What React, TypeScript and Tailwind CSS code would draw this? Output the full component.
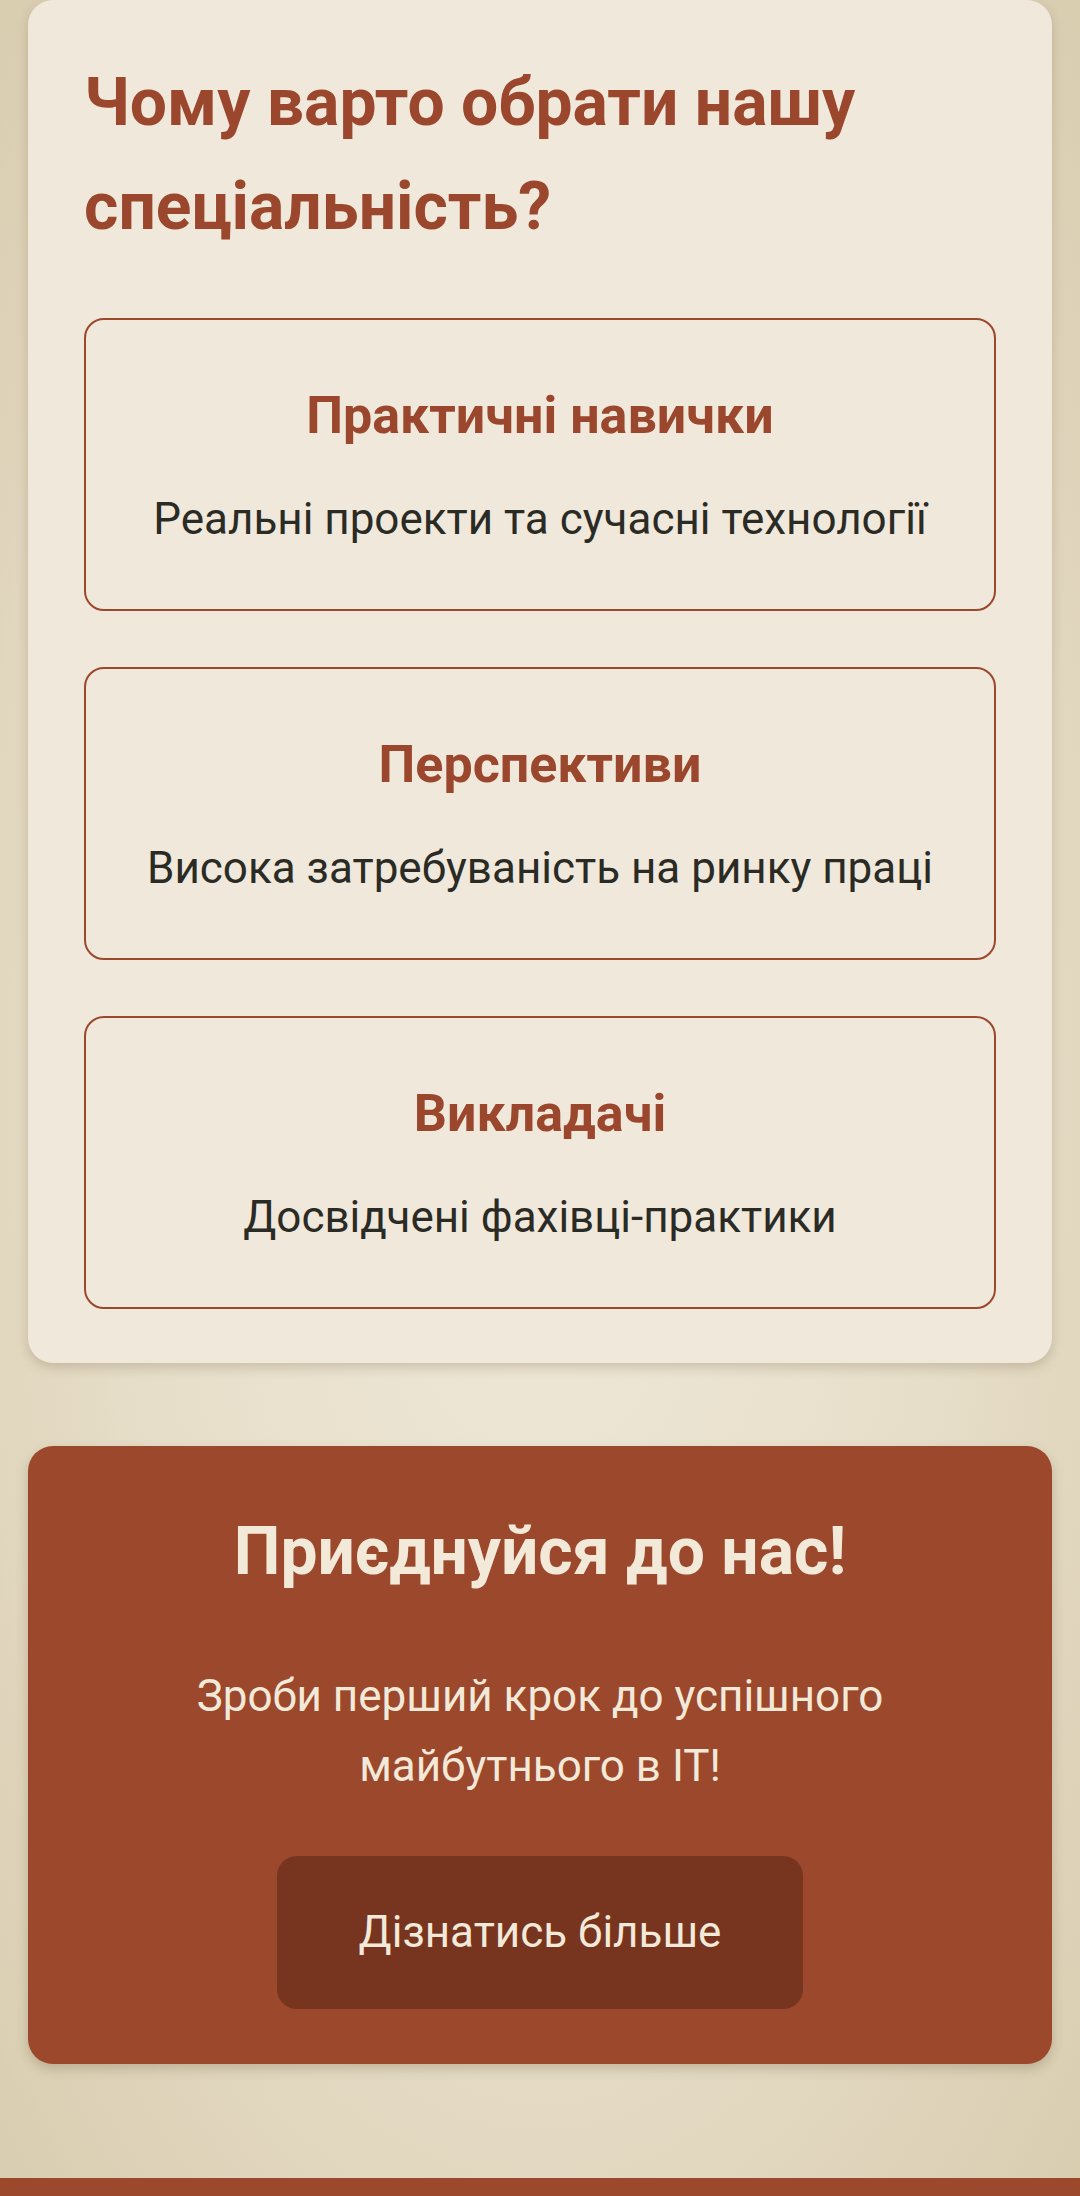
const FEATURES = [
  { title: 'Практичні навички', text: 'Реальні проекти та сучасні технології' },
  { title: 'Перспективи', text: 'Висока затребуваність на ринку праці' },
  { title: 'Викладачі', text: 'Досвідчені фахівці-практики' },
];

function FeatureCard({ title, text }: { title: string; text: string }) {
  return (
    <div className="rounded-[20px] border-2 border-[#9b482d] pt-[54px] pb-[56px] text-center">
      <h3 className="text-[52px] leading-[84px] font-bold text-[#9b472d]">{title}</h3>
      <p className="mt-[28px] text-[44px] leading-[67px] text-[#2b2b26]">{text}</p>
    </div>
  );
}

export default function App() {
  return (
    <div className="min-h-screen flex flex-col bg-[radial-gradient(ellipse_at_center,#f0e9da_0%,#e7dec9_55%,#d9cdb0_100%)] font-['Roboto','Noto_Sans',sans-serif]">
      <main className="flex-1 px-[28px]">
        <section className="rounded-[25px] bg-[#f0e8da] px-[56px] pt-[51px] pb-[54px] shadow-[0_5px_12px_rgba(90,70,40,0.22)]">
          <h2 className="text-[66px] leading-[104px] font-bold text-[#9b472d]">
            Чому варто обрати нашу спеціальність?
          </h2>
          <div className="mt-[59px] flex flex-col gap-[56px]">
            {FEATURES.map((f) => (
              <FeatureCard key={f.title} title={f.title} text={f.text} />
            ))}
          </div>
        </section>

        <section className="mt-[83px] rounded-[25px] bg-[#9b482d] px-[56px] pt-[54px] pb-[55px] text-center text-[#f3e9d8] shadow-[0_5px_12px_rgba(90,70,40,0.25)]">
          <h2 className="text-[66px] leading-[104px] font-bold">Приєднуйся до нас!</h2>
          <p className="mx-auto mt-[57px] max-w-[740px] text-[44px] leading-[70px]">
            Зроби перший крок до успішного майбутнього в IT!
          </p>
          <button className="mt-[55px] rounded-[20px] bg-[#77341f] px-[82px] py-[43px] text-[44px] leading-[67px] text-[#f3e9d8]">
            Дізнатись більше
          </button>
        </section>
      </main>
      <footer className="mt-[112px] h-[18px] bg-[#9b482d]" />
    </div>
  );
}
